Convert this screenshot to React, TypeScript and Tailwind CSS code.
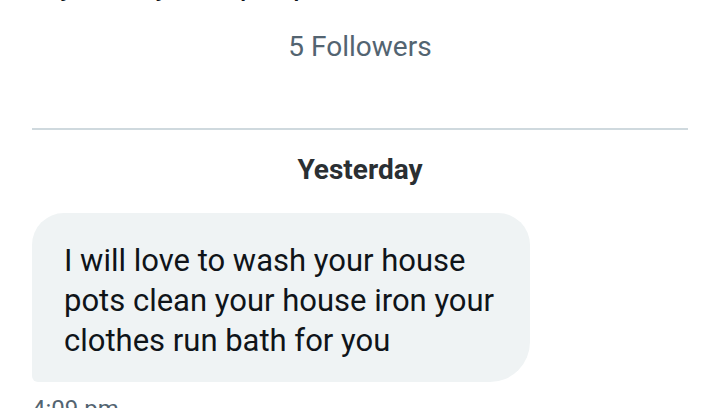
export default function App() {
  return (
    <div
      className="w-[720px] h-[408px] overflow-hidden bg-white px-8"
      style={{ fontFamily: 'Roboto, "Liberation Sans", sans-serif' }}
    >
      <p className="-mt-[36px] text-[32px] leading-[40px] text-[#0f1419]">my family and people</p>
      <p className="mt-[23px] text-center text-[28px] leading-[40px] text-[#536471]">5 Followers</p>
      <div className="mt-[61px] h-[2px] bg-[#cfd9de]" />
      <p className="mt-[20px] text-center text-[28px] font-bold leading-[40px] text-[#2a2f33]">Yesterday</p>
      <div className="mt-[23px] w-[498px] rounded-[32px] rounded-br-[40px] rounded-bl-[6px] bg-[#eff3f4] pl-8 pr-4 pt-[28px] pb-[21px]">
        <p className="text-[31px] leading-[40px] text-[#0f1419]">
          I will love to wash your house
          <br />
          pots clean your house iron your
          <br />
          clothes run bath for you
        </p>
      </div>
      <p className="mt-[9px] text-[24px] leading-[36px] text-[#536471]">4:09 pm</p>
    </div>
  );
}
